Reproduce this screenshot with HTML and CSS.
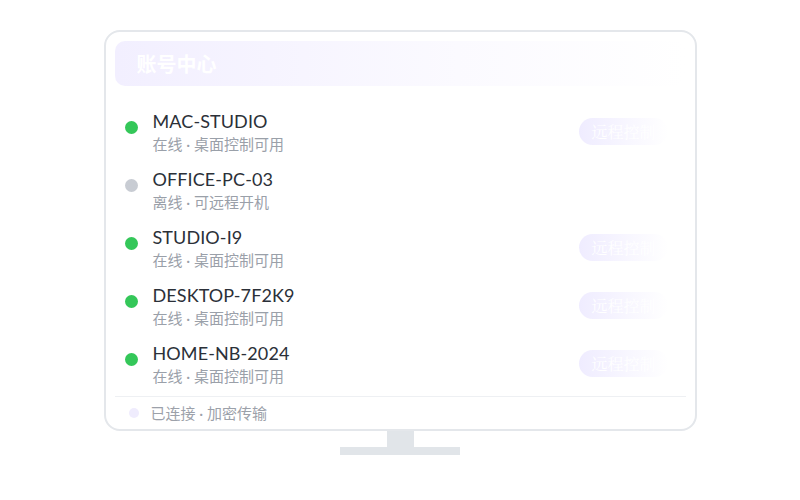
FILE: index.html
```html
<!DOCTYPE html>
<html lang="zh-CN">
<head>
    <meta charset="UTF-8">
    <meta name="viewport" content="width=device-width, initial-scale=1.0">
    <title>账号中心</title>
    <link rel="stylesheet" href="styles.css">
</head>
<body>
    <div class="monitor">
        <div class="screen">
            <div class="header">
                <h1 class="title">账号中心</h1>
            </div>
            <ul class="devices">
                <li class="device">
                    <span class="dot online"></span>
                    <div class="info">
                        <div class="name">MAC-STUDIO</div>
                        <div class="status">在线 · 桌面控制可用</div>
                    </div>
                    <button class="connect">远程控制</button>
                </li>
                <li class="device">
                    <span class="dot offline"></span>
                    <div class="info">
                        <div class="name">OFFICE-PC-03</div>
                        <div class="status">离线 · 可远程开机</div>
                    </div>
                </li>
                <li class="device">
                    <span class="dot online"></span>
                    <div class="info">
                        <div class="name">STUDIO-I9</div>
                        <div class="status">在线 · 桌面控制可用</div>
                    </div>
                    <button class="connect">远程控制</button>
                </li>
                <li class="device">
                    <span class="dot online"></span>
                    <div class="info">
                        <div class="name">DESKTOP-7F2K9</div>
                        <div class="status">在线 · 桌面控制可用</div>
                    </div>
                    <button class="connect">远程控制</button>
                </li>
                <li class="device">
                    <span class="dot online"></span>
                    <div class="info">
                        <div class="name">HOME-NB-2024</div>
                        <div class="status">在线 · 桌面控制可用</div>
                    </div>
                    <button class="connect">远程控制</button>
                </li>
            </ul>
            <div class="footer">
                <span class="footer-dot"></span>
                <span class="footer-text">已连接 · 加密传输</span>
            </div>
        </div>
        <div class="neck"></div>
        <div class="base"></div>
    </div>
</body>
</html>
```

FILE: styles.css
```css
body {
    margin: 0;
    background: #ffffff;
    font-family: 'Lato', 'Noto Sans CJK SC', sans-serif;
}

.monitor {
    display: flex;
    flex-direction: column;
    align-items: center;
    padding-top: 30px;
}

.screen {
    box-sizing: border-box;
    width: 593px;
    padding: 9px 9px 0;
    border: 2px solid #e4e7eb;
    border-radius: 16px;
    background: #ffffff;
}

.header {
    height: 45px;
    display: flex;
    align-items: center;
    padding-left: 22px;
    border-radius: 10px;
    background: linear-gradient(to right, #f2efff, #fbfaff 60%, #ffffff);
}

.title {
    margin: 0;
    font-size: 20px;
    font-weight: 700;
    color: #ffffff;
    font-family: 'Noto Sans CJK SC', sans-serif;
}

.devices {
    list-style: none;
    margin: 24px 0 0;
    padding: 0;
    display: flex;
    flex-direction: column;
    gap: 14px;
}

.device {
    display: flex;
    align-items: flex-start;
    padding: 0 18px 0 10px;
    height: 44px;
}

.dot {
    width: 13px;
    height: 13px;
    border-radius: 50%;
    margin-top: 11px;
    margin-right: 15px;
    flex-shrink: 0;
}

.dot.online {
    background: #34c759;
}

.dot.offline {
    background: #c8ccd3;
}

.info {
    flex: 1;
}

.name {
    font-size: 18px;
    line-height: 22px;
    color: #2b3038;
    letter-spacing: 0.1px;
}

.status {
    margin-top: 2px;
    font-size: 15px;
    line-height: 20px;
    color: #9aa0a9;
}

.connect {
    align-self: center;
    margin-top: -2px;
    height: 27px;
    padding: 0 12px;
    border: none;
    border-radius: 14px;
    background: linear-gradient(to right, #efecff, #ffffff);
    color: #ffffff;
    font-family: 'Noto Serif CJK SC', serif;
    font-size: 16px;
}

.footer {
    display: flex;
    align-items: center;
    margin-top: 10px;
    padding: 5px 0 5px 14px;
    border-top: 1px solid #eef0f3;
}

.footer-dot {
    width: 10px;
    height: 10px;
    border-radius: 50%;
    background: #efecfd;
    margin-right: 12px;
}

.footer-text {
    font-size: 15px;
    line-height: 22px;
    color: #9ca1aa;
}

.neck {
    width: 27px;
    height: 16px;
    background: #e1e5e9;
}

.base {
    width: 120px;
    height: 8px;
    background: #e1e5e9;
}
```
